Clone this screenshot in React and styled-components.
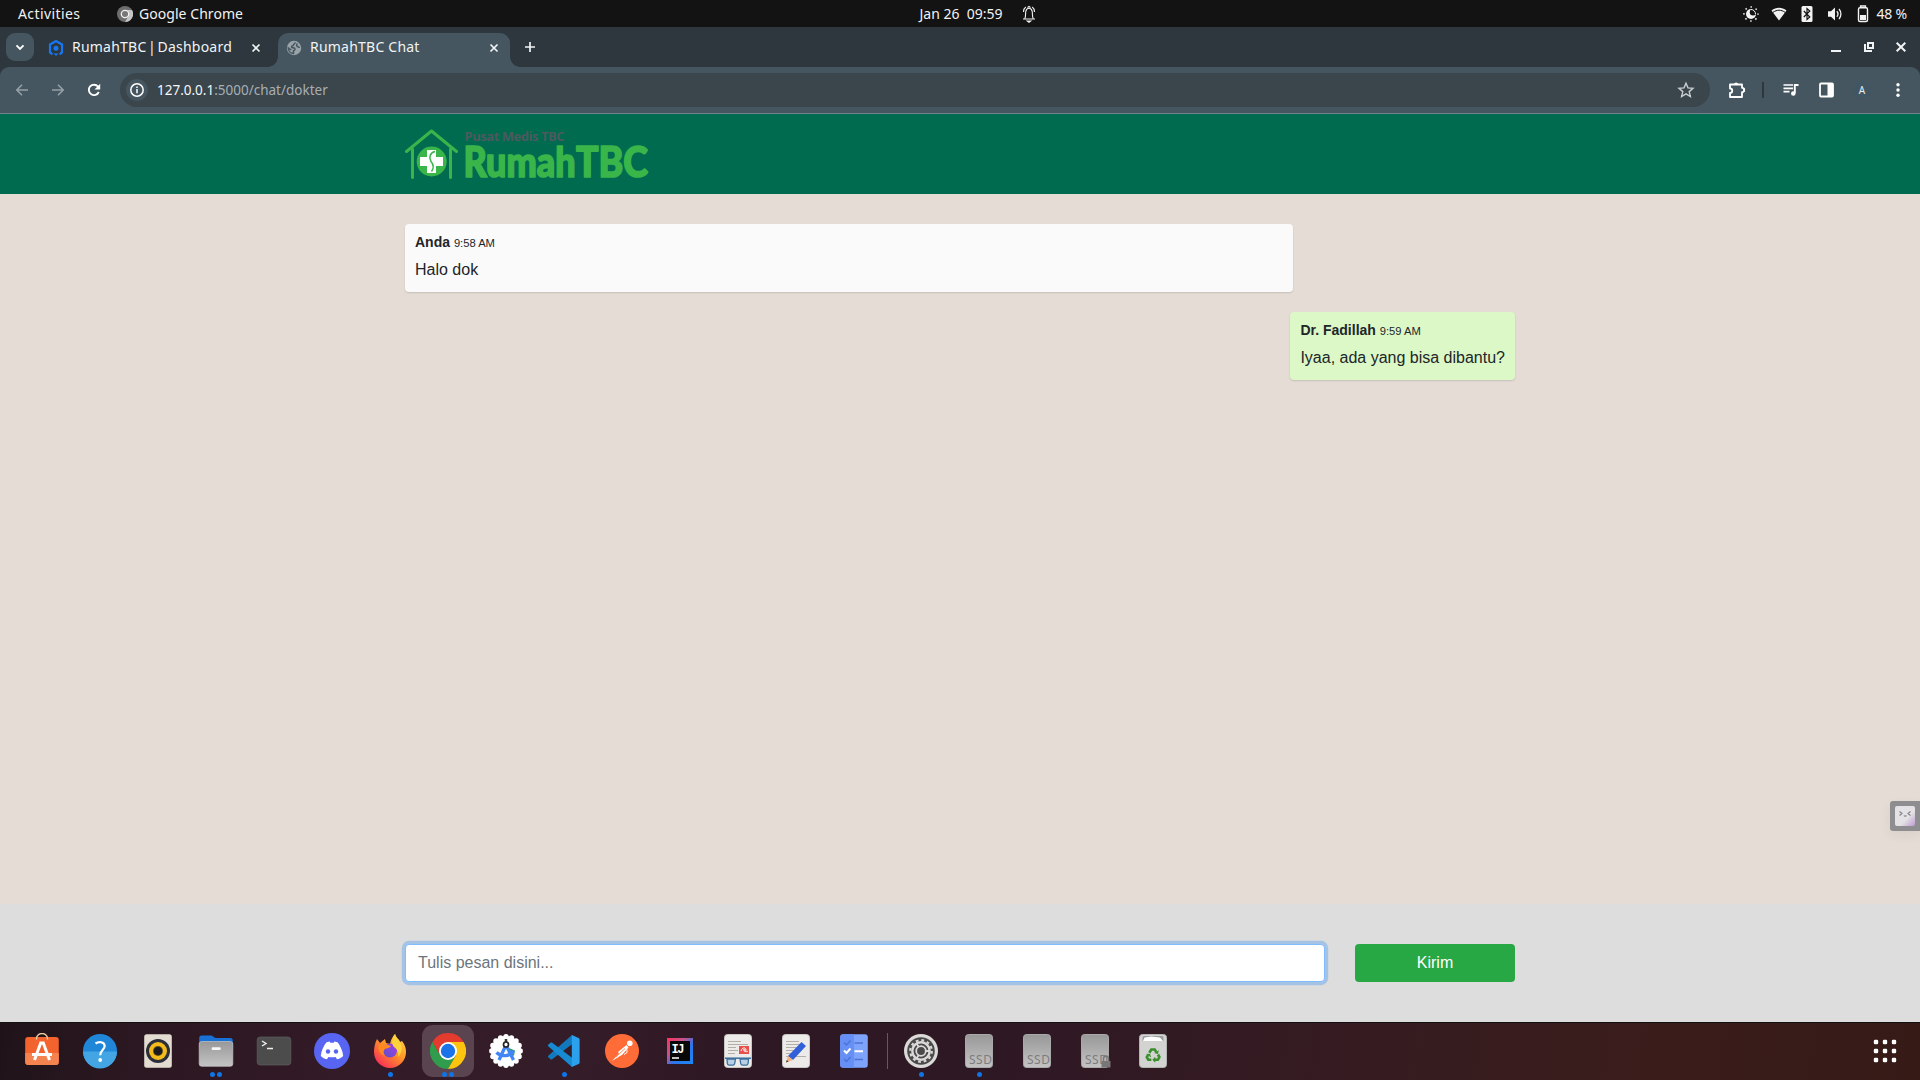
import React from "react";
import styled, { createGlobalStyle } from "styled-components";

const Global = createGlobalStyle`
  * { box-sizing: border-box; }
  html, body { margin: 0; padding: 0; background: #e5ddd5; overflow: hidden; }
  body { font-family: "Liberation Sans", Arial, sans-serif; color: #212529; }
`;

const Desktop = styled.div`
  width: 1920px;
  height: 1080px;
  display: flex;
  flex-direction: column;
  overflow: hidden;
`;

const uiFont = `"Noto Sans", "Open Sans", sans-serif`;

/* ---------- system bar ---------- */
const SystemBar = styled.header`
  height: 27px;
  flex: none;
  display: grid;
  grid-template-columns: 1fr auto 1fr;
  background: #131313;
  color: #f2f2f2;
  font: 14px/26px ${uiFont};
  white-space: pre;
`;
const BarLeft = styled.div`
  display: flex;
  align-items: center;
  padding-left: 18px;
`;
const Activities = styled.span`
  width: 99px;
  letter-spacing: 0.4px;
`;
const AppName = styled.span`
  margin-left: 6px;
  letter-spacing: 0.05px;
`;
const Clock = styled.div`
  display: flex;
  align-items: center;
  gap: 18px;
  padding-left: 36px;
`;
const Tray = styled.div`
  display: flex;
  align-items: center;
  justify-content: flex-end;
  padding-right: 13px;
`;
const TrayIcon = styled.svg`
  width: 18px;
  height: 18px;
  margin-right: ${(p) => p.$gap ?? 10}px;
`;
const Percent = styled.span`
  font-size: 14px;
  letter-spacing: -0.2px;
`;

/* ---------- browser chrome ---------- */
const TabStrip = styled.div`
  height: 40px;
  flex: none;
  display: flex;
  padding: 6px 11px 0 6px;
  background: #2d373d;
  color: #f1f3f4;
  font: 14px/28px ${uiFont};
`;
const TabSearch = styled.button`
  width: 28px;
  height: 28px;
  padding: 0;
  border: 0;
  border-radius: 9px;
  background: #455660;
  display: grid;
  place-items: center;
  margin-right: 4px;
`;
const Tab = styled.div`
  position: relative;
  display: flex;
  align-items: center;
  width: ${(p) => p.$width}px;
  height: 34px;
  padding: 0 ${(p) => p.$end}px 5px ${(p) => p.$pad}px;
  border-radius: 10px 10px 0 0;
  background: ${(p) => (p.$active ? "#455660" : "transparent")};
  &::before, &::after {
    content: "";
    display: ${(p) => (p.$active ? "block" : "none")};
    position: absolute;
    bottom: 0;
    width: 10px;
    height: 10px;
  }
  &::before { left: -10px; background: radial-gradient(circle at 0 0, transparent 9.5px, #455660 10px); }
  &::after { right: -10px; background: radial-gradient(circle at 100% 0, transparent 9.5px, #455660 10px); }
`;
const TabTitle = styled.span`
  flex: 1;
  margin-left: 8px;
  padding-bottom: 1px;
  white-space: nowrap;
  letter-spacing: 0.22px;
  word-spacing: ${(p) => p.$words ?? 0}px;
`;
const NewTab = styled.div`
  margin: 6px 0 0 12px;
  width: 16px;
  height: 16px;
  display: flex;
`;
const WindowControls = styled.div`
  margin-left: auto;
  display: flex;
  gap: 16.5px;
  padding-top: 6px;
`;
const ToolbarWrap = styled.div`
  height: 47px;
  flex: none;
  background: #2d373d;
`;
const Toolbar = styled.div`
  height: 47px;
  display: flex;
  align-items: center;
  padding: 0 13px 1px;
  border-bottom: 1px solid #74828a;
  border-radius: 9px 9px 0 0;
  background: #455660;
`;
const NavIcon = styled.svg`
  width: 18px;
  height: 18px;
  margin-right: ${(p) => p.$gap ?? 18}px;
`;
const AddressBar = styled.div`
  width: 1590px;
  height: 34px;
  display: flex;
  align-items: center;
  padding: 0 15px 0 6px;
  border-radius: 17px;
  background: #3a454c;
  color: #a8afb3;
  font: 13.5px/34px ${uiFont};
`;
const SiteInfo = styled.div`
  width: 22px;
  height: 22px;
  border-radius: 50%;
  background: #455660;
  display: grid;
  place-items: center;
  margin-right: 9px;
`;
const Host = styled.span`
  color: #f5f7f8;
`;
const Spacer = styled.div`
  flex: 1;
`;
const Actions = styled.div`
  flex: 1;
  display: flex;
  align-items: center;
  padding-left: 18px;
`;
const Divider = styled.div`
  width: 2px;
  height: 16px;
  margin: 0 18px 0 16px;
  background: #2d373d;
`;
const Profile = styled.div`
  width: 18px;
  height: 18px;
  border-radius: 50%;
  background: #405763;
  color: #e9eef0;
  text-align: center;
  font: 10px/18px ${uiFont};
  margin: 0 24px 0 17px;
`;

/* ---------- page ---------- */
const SiteHeader = styled.div`
  height: 80px;
  flex: none;
  background: #006b4f;
`;
const Container = styled.div`
  width: 1140px;
  margin: 0 auto;
  padding: 0 15px;
`;
const Logo = styled.svg`
  display: block;
  width: 250px;
  height: 80px;
`;
const Chat = styled.main`
  position: relative;
  height: 710px;
  flex: none;
  padding-top: 30px;
  background: #e5ddd5;
`;
const Thread = styled(Container)`
  display: flex;
  flex-direction: column;
  align-items: flex-start;
  gap: 20px;
`;
const Bubble = styled.div`
  height: 68px;
  width: ${(p) => (p.$mine ? "80%" : "auto")};
  align-self: ${(p) => (p.$mine ? "flex-start" : "flex-end")};
  padding: 10px;
  border-radius: 4px;
  background: ${(p) => (p.$mine ? "#fafafa" : "#dcf8c6")};
  box-shadow: 0 1px 2px rgba(0, 0, 0, 0.14);
  white-space: nowrap;
`;
const Meta = styled.div`
  height: 24px;
  font-size: 14px;
  line-height: 16.8px;
  font-weight: 700;
`;
const Time = styled.small`
  font-size: 11.2px;
  font-weight: 400;
`;
const Message = styled.p`
  margin: 0;
  font-size: 16px;
  line-height: 24px;
`;
const Widget = styled.div`
  position: absolute;
  right: 0;
  top: 607px;
  width: 30px;
  height: 30px;
  padding: 5px;
  border-radius: 3px 0 0 3px;
  background: #8e8e90;
  box-shadow: 0 4px 12px rgba(0, 0, 0, 0.06);
`;
const WidgetFace = styled.div`
  width: 20px;
  height: 20px;
  border-radius: 2px;
  background: linear-gradient(135deg, #e4e2e4 60%, #bd9bd3);
  display: flex;
`;
const Composer = styled.div`
  height: 118px;
  flex: none;
  padding-top: 40px;
  background: #ddd;
`;
const ComposerRow = styled(Container)`
  display: flex;
  gap: 30px;
`;
const Field = styled.input`
  width: 920px;
  height: 38px;
  padding: 6px 12px;
  border: 1px solid #80bdff;
  border-radius: 4px;
  outline: 0;
  background: #fff;
  box-shadow: 0 0 0 3.2px rgba(0, 123, 255, 0.25);
  font: 16px/24px "Liberation Sans", Arial, sans-serif;
  &::placeholder { color: #6c757d; opacity: 1; }
`;
const Send = styled.button`
  width: 160px;
  height: 38px;
  padding: 0;
  border: 0;
  border-radius: 4px;
  background: #28a745;
  color: #fff;
  font: 16px/24px "Liberation Sans", Arial, sans-serif;
`;

/* ---------- dock ---------- */
const Dock = styled.footer`
  height: 58px;
  flex: none;
  display: flex;
  padding-left: 13px;
  border-top: 1px solid #111;
  background: linear-gradient(100deg, #1f1319 0, #2a1720 6%, #341b28 20%, #351c29 30%, #2e1823 37%, #2e1824 52%, #341b22 66%, #3a1d1b 86%, #351a16 100%);
`;
const DockItem = styled.div`
  position: relative;
  width: 58px;
  height: 57px;
  display: grid;
  place-items: center;
`;
const Tile = styled.div`
  width: 52px;
  height: 52px;
  margin-bottom: 1px;
  border-radius: 11px;
  display: grid;
  place-items: center;
  background: ${(p) => (p.$active ? "#5a4450" : "transparent")};
`;
const DockIcon = styled.svg`
  width: 36px;
  height: 36px;
  display: block;
`;
const Dots = styled.div`
  position: absolute;
  left: 0;
  right: 0;
  bottom: 3px;
  display: flex;
  justify-content: center;
  gap: 2px;
`;
const Dot = styled.i`
  width: 5px;
  height: 5px;
  border-radius: 50%;
  background: #0f74e6;
`;
const DockRule = styled.div`
  width: 1px;
  height: 36px;
  margin: 10px 4px 0;
  background: #6a5560;
`;
const AppsGrid = styled.svg`
  width: 24px;
  height: 24px;
  margin: 16px 23px 0 auto;
`;

/* ---------- drawings ---------- */
const Close = () => (
  <svg width="16" height="16" viewBox="0 0 16 16">
    <path d="M4.500 4.500l7 7M11.500 4.500l-7 7" stroke="#f1f3f4" strokeWidth="1.700" />
  </svg>
);

const SsdBody = ({ lock }) => (
  <>
    <rect x="4.500" y="1.500" width="27" height="33" rx="3" fill="url(#ssd)" stroke="#a9a9a9" />
    <text x="8" y="30.500" fontSize="12" fontFamily="Noto Sans" fill="#7d7d7d" textLength="23">SSD</text>
    {lock && (
      <>
        <path d="M26.500 29v-3a2.500 3 0 0 1 5 0v3" fill="none" stroke="#777" strokeWidth="1.500" />
        <rect x="24.500" y="28" width="9" height="6.500" fill="#777" />
      </>
    )}
  </>
);

const scallops = Array.from({ length: 16 }, (_, i) => {
  const a = (i * Math.PI) / 8;
  return [18 + 14.2 * Math.cos(a), 18 + 14.2 * Math.sin(a)];
});

const icons = {
  software: (
    <>
      <rect x="1.200" y="4" width="33.600" height="28" rx="3" fill="#f2632e" />
      <path d="M1.200 20h33.600v9a3 3 0 0 1-3 3H4.200a3 3 0 0 1-3-3z" fill="#f5834f" />
      <path d="M12.500 6.500V5.500a5.500 5 0 0 1 11 0v1" fill="none" stroke="#e8c9a0" strokeWidth="1.400" />
      <path d="M10.500 27L16.700 10h2.600l6.200 17M8 21.500h20" fill="none" stroke="#fff" strokeWidth="3" />
    </>
  ),
  help: (
    <>
      <circle cx="18" cy="18" r="17" fill="#1f86d8" />
      <path d="M1 18.500a17 17 0 0 0 34 0z" fill="#44a5e4" />
      <path d="M13.500 10.500c3-2.200 9-2 9.200 2.400.1 4-4.500 4.500-4.500 9.300" fill="none" stroke="#fff" strokeWidth="2.200" />
      <circle cx="18.200" cy="27" r="1.900" fill="#fff" />
    </>
  ),
  music: (
    <>
      <rect x="4.200" y="1.200" width="27.600" height="33.600" rx="2.500" fill="#e2ddd0" />
      <circle cx="18" cy="18" r="12" fill="#2b2f3a" />
      <circle cx="18" cy="18" r="9" fill="#f3bb1b" />
      <circle cx="18" cy="18" r="5" fill="#5b4b18" />
      <circle cx="18" cy="18" r="4" fill="#191b20" />
    </>
  ),
  files: (
    <>
      <path d="M1.200 5a2.500 2.500 0 0 1 2.500-2.500h9.500c2 0 2.500 2.500 4.500 2.500h14.600a2.500 2.500 0 0 1 2.500 2.500V16H1.200z" fill="#1971d6" />
      <rect x="1.200" y="8.500" width="33.600" height="24.800" rx="2.500" fill="url(#ssd)" stroke="#c4c4c4" strokeWidth=".7" />
      <rect x="13.700" y="14.300" width="9" height="2.600" rx="1" fill="#f7f7f7" />
    </>
  ),
  terminal: (
    <>
      <rect x="1.200" y="4" width="33.600" height="28" rx="3" fill="#4c4c4c" stroke="#606060" strokeWidth=".7" />
      <path d="M6 8l4 2.500L6 13M11 15.500h6" fill="none" stroke="#f1f1f1" strokeWidth="1.400" />
    </>
  ),
  discord: (
    <>
      <circle cx="18" cy="18" r="18" fill="#5865f2" />
      <path d="M12.500 9.300c2-.8 3-.9 3.200-.9l.6 1.300h3.500l.6-1.300c.2 0 1.300.1 3.200.9 2.500 3.500 5.200 8.300 5.600 13.700-2.500 2.400-4.700 3-6.200 3.200l-1.400-2.300c-2.400.6-4.800.6-7.200 0L13 26.200c-1.500-.2-3.700-.8-6.200-3.200.4-5.400 3-10.200 5.700-13.700z" fill="#fff" />
      <circle cx="14" cy="18.500" r="2.200" fill="#5865f2" />
      <circle cx="22" cy="18.500" r="2.200" fill="#5865f2" />
    </>
  ),
  firefox: (
    <>
      <path d="M5 6l3 4 5-4 1 4 4 1c1-5 3-8 5-10 1 4 4 5 5 8l2-1c3 4 4 7 4 11a16 16 0 0 1-32 0c0-5 1-9 3-13z" fill="url(#fire)" />
      <circle cx="18" cy="17.500" r="7" fill="url(#globe)" />
      <path d="M7 12c3-2 7-1 12 1-2 3-5 2-6 3-2 2-2 4 0 7-5-2-8-6-6-11z" fill="#ff8a1f" />
      <path d="M23 1c1 4 4 5 5 8 3 5 2 11-2 15 1-5-1-8-4-10-3-4-2-9 1-13z" fill="#ffd43a" />
    </>
  ),
  chrome: (
    <>
      <path d="M18 9h15.590a18 18 0 0 0-31.180 0l7.800 13.500z" fill="#e33b2e" />
      <path d="M2.410 9a18 18 0 0 0 15.590 27l7.800-13.500L18 18l-7.800 4.500z" fill="#2f9d4c" />
      <path d="M33.590 9H18v9l7.800 4.500L18 36A18 18 0 0 0 33.590 9z" fill="#fcc30f" />
      <circle cx="18" cy="18" r="9" fill="#fff" />
      <circle cx="18" cy="18" r="7.200" fill="#1a73e8" />
    </>
  ),
  studio: (
    <>
      <circle cx="18" cy="18" r="15" fill="#fff" />
      {scallops.map(([x, y]) => <circle key={`${x}${y}`} cx={x} cy={y} r="2.700" fill="#fff" />)}
      <path d="M21 15l6 2.500-1 5-4 1z" fill="#36a057" />
      <path d="M17.500 13L11 27M18.500 13l7 14M8.500 19.500c5 5 14 4 17-2" fill="none" stroke="#4285f4" strokeWidth="3.300" />
      <path d="M18 6v3" stroke="#333" strokeWidth="2.500" />
      <circle cx="18" cy="11.500" r="2.500" fill="#fff" stroke="#222" strokeWidth="1.700" />
    </>
  ),
  code: (
    <>
      <path d="M26 2L2.500 22.500c-.7.700-.7 1.500 0 2l2 1.800c.5.400 1.200.4 1.700 0L27 10.500z" fill="#1279bd" />
      <path d="M26 34L2.500 13.500c-.7-.7-.7-1.500 0-2l2-1.800c.5-.4 1.200-.4 1.700 0L27 25.500z" fill="#168bd2" />
      <path d="M25.800 2l6.800 3c.6.300 1 .8 1 1.500v23c0 .7-.4 1.200-1 1.500l-6.800 3z" fill="#2ba1ee" />
    </>
  ),
  postman: (
    <>
      <circle cx="18" cy="18" r="17" fill="#ff6c37" />
      <circle cx="25.800" cy="10.200" r="2.800" fill="#fff" />
      <path d="M22.500 12l2 2.500-6 7-10.500 6.500 7-7.500-1-1.500z" fill="#fff" />
      <path d="M12 24l9-8.500" stroke="#ff6c37" strokeWidth=".8" />
      <path d="M23 16.500v3l-3 2" fill="none" stroke="#fff" />
    </>
  ),
  idea: (
    <>
      <rect x="5" y="5" width="26" height="26" fill="url(#idea)" />
      <rect x="8" y="8" width="20" height="20" fill="#080808" />
      <text x="9.500" y="19.500" fontSize="12" fontWeight="700" fontFamily="Liberation Mono" fill="#fff" textLength="13">IJ</text>
      <path d="M10 25h7" stroke="#fff" strokeWidth="1.500" />
    </>
  ),
  docs: (
    <>
      <rect x="4.500" y="1.500" width="27" height="33" rx="3" fill="#ecebe9" stroke="#c9c7c4" />
      <path d="M8 8.500h13M8 11.500h20M8 14.500h8M8 17.500h10M8 20.500h7" stroke="#b3aea6" />
      <rect x="19" y="13" width="10" height="8" fill="#e8504c" />
      <path d="M21 18c1-4 5-4 5-1 0 2-3 2-2-1 1 3 3 3 4 2" fill="none" stroke="#fff" strokeWidth=".9" />
      <path d="M5 25.200h26" stroke="#3c6f9f" strokeWidth="1.500" />
      <path d="M7 26h8.500l-.8 4.500a2 2 0 0 1-2 1.700H9.300a2 2 0 0 1-2-1.700zM20 26h8.500l-.4 4.500a2 2 0 0 1-2 1.700h-3.400a2 2 0 0 1-2-1.700z" fill="#b9d0e4" stroke="#3c6f9f" strokeWidth="1.300" />
    </>
  ),
  editor: (
    <>
      <rect x="4.500" y="1.500" width="27" height="33" rx="3" fill="#ecebe9" stroke="#c9c7c4" />
      <path d="M8 8.500h13M8 11.500h16M8 14.500h12M8 17.500h10M8 20.500h8M8 23.500h20" stroke="#b3aea6" />
      <path d="M23.500 9l4.500 4L15 27l-5-4z" fill="#3160d9" />
      <path d="M10 23l5 4-7 2.500z" fill="#f0b57e" />
      <path d="M8.800 27l1.700 1.500-2.500 1z" fill="#333" />
    </>
  ),
  todo: (
    <>
      <rect x="4.200" y="1.200" width="27.600" height="33.600" rx="3" fill="#7ea3fb" />
      <path d="M7.200 1.200H18v33.600H7.200a3 3 0 0 1-3-3V4.200a3 3 0 0 1 3-3z" fill="#6690f5" />
      <path d="M8 9.500l2.500 2.500 4-4.500M8 26l2.500 2.500 4-4.500M18.500 10H27M18.500 26.500H27" fill="none" stroke="#4b74d6" strokeWidth="1.500" />
      <path d="M8 17.500l2.500 2.500 4-4.500M18.500 18.300H27" fill="none" stroke="#fff" strokeWidth="2" />
    </>
  ),
  settings: (
    <>
      <circle cx="18" cy="18" r="17" fill="#dcdad8" />
      <circle cx="18" cy="18" r="13.800" fill="#4a4a4a" />
      <circle cx="18" cy="18" r="10.800" fill="none" stroke="#dcdad8" strokeWidth="2.200" strokeDasharray="2.800 2.855" />
      <circle cx="18" cy="18" r="8.700" fill="none" stroke="#dcdad8" strokeWidth="2.400" />
      <circle cx="18" cy="18" r="4.800" fill="none" stroke="#dcdad8" strokeWidth="1.800" />
      <path d="M22.500 18h4.500M15.800 21.800l-2.200 3.800M15.800 14.200l-2.200-3.800" stroke="#dcdad8" strokeWidth="1.800" />
    </>
  ),
  ssd: <SsdBody />,
  ssdLocked: <SsdBody lock />,
  trash: (
    <>
      <rect x="4.500" y="1.500" width="27" height="33" rx="3" fill="#d3d3d2" stroke="#b4b4b4" />
      <path d="M7.500 8V4.500a1.500 1.500 0 0 1 1.500-1.500h18a1.500 1.500 0 0 1 1.500 1.500V8z" fill="#9c9c9c" />
      <path d="M8 8l1.500-3.500L16 3.500l9 1L28 8z" fill="#fff" />
      <g fill="none" stroke="#3a8f2c" strokeWidth="2.600">
        <path d="M14.300 19.700l2-3.200h3.400l1.500 2.400" />
        <path d="M23 21.500l1.400 2.500-1.500 2.800h-3" />
        <path d="M16.300 26.800h-3l-1.500-2.600 1.200-2" />
      </g>
      <path d="M19 20l4 1 .8-3.800zM20.300 23.800v6l-3-3zM11 21l4-.2 1.200 3.600z" fill="#3a8f2c" />
    </>
  ),
};

const dockLeft = [
  ["software", 0], ["help", 0], ["music", 0], ["files", 2], ["terminal", 0], ["discord", 0],
  ["firefox", 1], ["chrome", 2, true], ["studio", 0], ["code", 1], ["postman", 0], ["idea", 0],
  ["docs", 0], ["editor", 0], ["todo", 0],
];
const dockRight = [["settings", 1], ["ssd", 1], ["ssd", 0], ["ssdLocked", 0], ["trash", 0]];

const DockEntry = ({ item: [name, windows, active] }) => (
  <DockItem>
    <Tile $active={active}>
      <DockIcon viewBox="0 0 36 36">{icons[name]}</DockIcon>
    </Tile>
    <Dots>{Array.from({ length: windows }, (_, i) => <Dot key={i} />)}</Dots>
  </DockItem>
);

const Defs = styled.svg`
  position: absolute;
  width: 0;
  height: 0;
`;

export default function App() {
  return (
    <Desktop>
      <Global />
      <Defs>
        <defs>
          <linearGradient id="ssd" x1="0" y1="0" x2="0" y2="1">
            <stop offset="0" stopColor="#989898" /><stop offset="1" stopColor="#c4c4c4" />
          </linearGradient>
          <linearGradient id="fire" x1="1" y1="0" x2="0.2" y2="1">
            <stop offset="0" stopColor="#ffe14a" /><stop offset=".5" stopColor="#ff9328" /><stop offset="1" stopColor="#f8285a" />
          </linearGradient>
          <linearGradient id="globe" x1="1" y1="0" x2="0" y2="1">
            <stop offset="0" stopColor="#a042ec" /><stop offset="1" stopColor="#5c4fc4" />
          </linearGradient>
          <linearGradient id="idea" x1="0" y1="0" x2="1" y2="1">
            <stop offset="0" stopColor="#fe315d" /><stop offset=".35" stopColor="#c4538f" />
            <stop offset=".6" stopColor="#2b74ec" /><stop offset="1" stopColor="#1b87f6" />
          </linearGradient>
        </defs>
      </Defs>

      <SystemBar>
        <BarLeft>
          <Activities>Activities</Activities>
          <svg width="16" height="16" viewBox="0 0 16 16">
            <circle cx="8" cy="8" r="8" fill="#6e6e6e" />
            <path d="M8 4h7a8 8 0 0 1-7 12l3.500-6z" fill="#c4c4c4" />
            <circle cx="8" cy="8" r="3.700" fill="#777" stroke="#f1f1f1" strokeWidth="1.300" />
          </svg>
          <AppName>Google Chrome</AppName>
        </BarLeft>
        <Clock>
          <span>Jan 26  09:59</span>
          <svg width="16" height="18" viewBox="0 0 16 18" fill="none" stroke="#f2f2f2" strokeWidth="1.100">
            <path d="M3.800 13.500C5 11.500 4.300 9 4.800 6.500 5.200 4.300 6.200 3.300 8 3.300s2.800 1 3.200 3.200c.5 2.500-.2 5 1 7M2 14h12" />
            <path d="M2.500 7C2.500 4.500 3.300 3 4.800 2M13.500 7C13.500 4.500 12.700 3 11.200 2M6.500 2.500l1.500-1 1.500 1" />
            <path d="M6.300 16h3.400L8 17.300z" fill="#f2f2f2" />
          </svg>
        </Clock>
        <Tray>
          <TrayIcon viewBox="0 0 18 18">
            <circle cx="9" cy="9" r="7" fill="none" stroke="#e4e4e4" strokeWidth="1.600" strokeDasharray="1.600 3.898" strokeDashoffset=".8" />
            <circle cx="9" cy="9" r="5" fill="#f2f2f2" />
            <circle cx="11" cy="7.200" r="3.200" fill="#131313" />
            <path d="M9 4.500A4.500 4.500 0 0 1 13.500 9" fill="none" stroke="#f2f2f2" />
          </TrayIcon>
          <TrayIcon viewBox="0 0 18 18">
            <path d="M1.500 5.500C6 1.800 12 1.800 16.500 5.500L9 15.500z" fill="#f2f2f2" />
            <path d="M3 7.300c4-2.800 8-2.800 12 0" fill="none" stroke="#131313" strokeWidth="1" />
          </TrayIcon>
          <TrayIcon viewBox="0 0 18 18">
            <rect x="3.500" y="1" width="11" height="16" rx="1.500" fill="#f2f2f2" />
            <path d="M5.800 6l6 6L9 14.500v-11L11.800 6l-6 6" fill="none" stroke="#131313" strokeWidth="1.200" />
          </TrayIcon>
          <TrayIcon viewBox="0 0 18 18">
            <path d="M2 6.300h3L9 2.500v13L5 11.700H2z" fill="#f2f2f2" />
            <path d="M10.800 6.300a4 4 0 0 1 0 5.400M13 4a7.500 7.500 0 0 1 0 10" fill="none" stroke="#f2f2f2" strokeWidth="1.300" />
          </TrayIcon>
          <TrayIcon viewBox="0 0 18 18" $gap={5}>
            <path d="M6.500 3V1h5v2" fill="none" stroke="#f2f2f2" strokeWidth="1.300" />
            <rect x="4.500" y="2.700" width="9" height="13.800" rx="1.500" fill="none" stroke="#f2f2f2" strokeWidth="1.400" />
            <rect x="6" y="10" width="6" height="5" fill="#f2f2f2" />
          </TrayIcon>
          <Percent>48 %</Percent>
        </Tray>
      </SystemBar>

      <TabStrip>
        <TabSearch>
          <svg width="16" height="16" viewBox="0 0 16 16">
            <path d="M4.500 6.300L8 9.800l3.500-3.500" fill="none" stroke="#fff" strokeWidth="1.900" />
          </svg>
        </TabSearch>
        <Tab $width={240} $pad={10} $end={14}>
          <svg width="16" height="18" viewBox="0 0 16 18">
            <path d="M4.500 15.300L2 13.500v-8L8 2l6 3.500v8l-2.500 1.800" fill="none" stroke="#1677f2" strokeWidth="2.200" />
            <circle cx="8" cy="9.300" r="2.500" fill="#1677f2" />
            <path d="M5.500 14.500h5L8 17z" fill="#1677f2" />
          </svg>
          <TabTitle $words={-2.3}>RumahTBC | Dashboard</TabTitle>
          <Close />
        </Tab>
        <Tab $width={232} $pad={8} $end={8} $active>
          <svg width="16" height="16" viewBox="0 0 16 16">
            <circle cx="8" cy="8" r="7.200" fill="#9aa3a9" />
            <path d="M9 2.300c.5 1.700-1.500 1.200-1.500 2.700 0 1-2 .5-2 2s2.500.3 3.300 1.500c.8 1-.3 2-1.300 2.200v2.800C4.500 13.300 2.300 11 2.300 8l3 2M11.500 3.500c-1.500 1.300-1 2.500 0 3s1.500 1 2.300.8" fill="none" stroke="#455660" strokeWidth="1.500" />
          </svg>
          <TabTitle>RumahTBC Chat</TabTitle>
          <Close />
        </Tab>
        <NewTab>
          <svg width="16" height="16" viewBox="0 0 16 16">
            <path d="M8 3v10M3 8h10" stroke="#f1f3f4" strokeWidth="1.700" />
          </svg>
        </NewTab>
        <WindowControls>
          <svg width="16" height="16" viewBox="0 0 16 16"><path d="M3 12h10" stroke="#f1f3f4" strokeWidth="2" /></svg>
          <svg width="16" height="16" viewBox="0 0 16 16" fill="none" stroke="#f1f3f4" strokeWidth="2">
            <path d="M7 4h5v5H7zM4 5v7h7" />
          </svg>
          <svg width="16" height="16" viewBox="0 0 16 16"><path d="M3.700 3.700l8.600 8.600M12.300 3.700l-8.600 8.600" stroke="#f1f3f4" strokeWidth="2" /></svg>
        </WindowControls>
      </TabStrip>

      <ToolbarWrap>
        <Toolbar>
          <NavIcon viewBox="0 0 18 18" fill="none" stroke="#94a0a6" strokeWidth="1.600"><path d="M15 9H4M9 3.800L3.800 9 9 14.200" /></NavIcon>
          <NavIcon viewBox="0 0 18 18" fill="none" stroke="#94a0a6" strokeWidth="1.600"><path d="M3 9h11M9 3.800L14.200 9 9 14.200" /></NavIcon>
          <NavIcon viewBox="0 0 18 18" $gap={17}>
            <path d="M13.800 11a5.200 5.200 0 1 1-.8-5.500L14 6.800" fill="none" stroke="#fff" strokeWidth="1.900" />
            <path d="M15.200 2.800v5.700H9.500z" fill="#fff" />
          </NavIcon>
          <AddressBar>
            <SiteInfo>
              <svg width="16" height="16" viewBox="0 0 16 16">
                <circle cx="8" cy="8" r="6.200" fill="none" stroke="#fff" strokeWidth="1.500" />
                <path d="M8 7v4.200M8 4.500v1.600" stroke="#fff" strokeWidth="1.500" />
              </svg>
            </SiteInfo>
            <Host>127.0.0.1</Host>:5000/chat/dokter
            <Spacer />
            <svg width="18" height="18" viewBox="0 0 18 18">
              <path d="M9 2.300l2 4.600 5 .4-3.800 3.300 1.200 4.900L9 12.900l-4.400 2.600 1.200-4.900L2 7.300l5-.4z" fill="none" stroke="#c9ced1" strokeWidth="1.400" />
            </svg>
          </AddressBar>
          <Actions>
            <NavIcon viewBox="0 0 18 18" $gap={0}>
              <path d="M2 3.500h12v3.300a2.200 2.200 0 0 1 0 4.400v4.800H2v-4a2.200 2.200 0 0 0 0-4.500z" fill="none" stroke="#fff" strokeWidth="1.800" strokeLinejoin="round" />
              <path d="M6 3a2.200 2.200 0 0 1 4.200 0zM15 6.800a2.200 2.200 0 0 1 0 4.400z" fill="#fff" />
            </NavIcon>
            <Divider />
            <NavIcon viewBox="0 0 18 18">
              <path d="M1.500 4h9.500M1.500 7.300h9.500M1.500 10.600h6" stroke="#fff" strokeWidth="1.700" />
              <path d="M12.800 12V4h3.700" fill="none" stroke="#fff" strokeWidth="1.900" />
              <circle cx="11.300" cy="12.500" r="2.300" fill="#fff" />
            </NavIcon>
            <NavIcon viewBox="0 0 18 18" $gap={0}>
              <rect x="2" y="2.500" width="13" height="13" rx="1" fill="none" stroke="#fff" strokeWidth="1.800" />
              <path d="M9.500 2.500H15v13H9.500z" fill="#fff" />
            </NavIcon>
            <Profile>A</Profile>
            <svg width="6" height="18" viewBox="0 0 6 18" fill="#fff">
              <circle cx="3" cy="3.700" r="1.700" /><circle cx="3" cy="9" r="1.700" /><circle cx="3" cy="14.300" r="1.700" />
            </svg>
          </Actions>
        </Toolbar>
      </ToolbarWrap>

      <SiteHeader>
        <Container>
          <Logo viewBox="0 0 250 80">
            <g fill="none" stroke="#39b54a" strokeWidth="3" strokeLinecap="round" strokeLinejoin="round">
              <path d="M1.500 37.500L26.500 17l25 20.500" />
              <path d="M7.500 35v28.500M45.500 35v28.500" />
            </g>
            <circle cx="26.700" cy="47.500" r="15" fill="#39b54a" />
            <path d="M22 36h9v7h7v9h-7v7h-9v-7h-7v-9h7z" fill="#fff" />
            <path d="M30 37.500c-5 1-6.500 6-4 10 2.500 3 3.500 6 .5 10" fill="none" stroke="#39b54a" strokeWidth="1.500" />
            <text x="59.500" y="27.300" fontSize="13" fontWeight="700" fontFamily="Open Sans" fill="#4c5a5e" textLength="100">Pusat Medis TBC</text>
            <g fill="#39b54a" stroke="#39b54a" strokeWidth="1.700" strokeLinejoin="round" fontFamily="Lato" fontWeight="900" fontSize="42">
              <text x="58.500" y="62.500" textLength="112" lengthAdjust="spacingAndGlyphs">Rumah</text>
              <text x="171" y="62.500" textLength="72" lengthAdjust="spacingAndGlyphs">TBC</text>
            </g>
          </Logo>
        </Container>
      </SiteHeader>

      <Chat>
        <Thread>
          <Bubble $mine>
            <Meta>Anda <Time>9:58 AM</Time></Meta>
            <Message>Halo dok</Message>
          </Bubble>
          <Bubble>
            <Meta>Dr. Fadillah <Time>9:59 AM</Time></Meta>
            <Message>Iyaa, ada yang bisa dibantu?</Message>
          </Bubble>
        </Thread>
        <Widget>
          <WidgetFace>
            <svg width="20" height="20" viewBox="0 0 20 20" fill="none" stroke="#858188" strokeWidth="1.200">
              <path d="M4.500 5.500L7 7.500l-2.500 2M15.500 5.500L13 7.500l2.500 2M9 9.500c.5.800 2 .8 2.500 0" />
            </svg>
          </WidgetFace>
        </Widget>
      </Chat>

      <Composer>
        <ComposerRow>
          <Field placeholder="Tulis pesan disini..." />
          <Send>Kirim</Send>
        </ComposerRow>
      </Composer>

      <Dock>
        {dockLeft.map((item, i) => <DockEntry key={i} item={item} />)}
        <DockRule />
        {dockRight.map((item, i) => <DockEntry key={i} item={item} />)}
        <AppsGrid viewBox="0 0 24 24" fill="#fff">
          {[3, 12, 21].map((y) => [3, 12, 21].map((x) => (
            <rect key={`${x}-${y}`} x={x - 2.2} y={y - 2.2} width="4.400" height="4.400" rx="1.300" />
          )))}
        </AppsGrid>
      </Dock>
    </Desktop>
  );
}
